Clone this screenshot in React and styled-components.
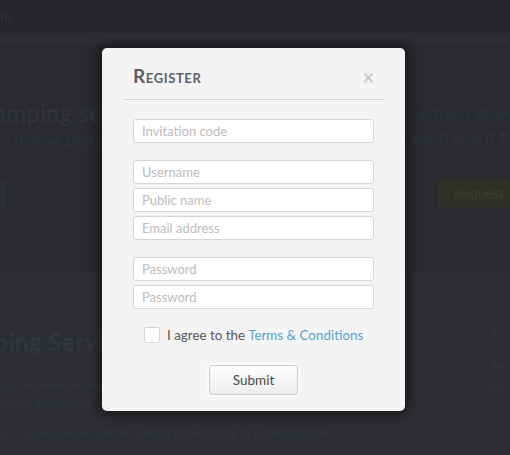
import React from "react";
import styled, { createGlobalStyle } from "styled-components";

const Global = createGlobalStyle`
  html, body { margin: 0; padding: 0; }
  body { background: #2c2e33; font-family: Lato, "Open Sans", sans-serif; overflow: hidden; }
`;

const Page = styled.div`
  position: relative;
  width: 510px;
  height: 455px;
  overflow: hidden;
  display: flex;
  flex-direction: column;
`;

const TopBar = styled.div`
  height: 33px;
  background: #25272c;
  display: flex;
  align-items: center;
  color: #2f3237;
  font-size: 13px;
  flex-shrink: 0;
`;

const Band = styled.div`
  height: 11px;
  background: #2b2d32;
  flex-shrink: 0;
`;

const Hero = styled.div`
  height: 228px;
  background: #282a30;
  flex-shrink: 0;
  display: grid;
  grid-template-columns: 405px 1fr;
  padding-top: 55px;
  box-sizing: border-box;
  overflow: hidden;
`;

const Col = styled.div`
  display: flex;
  flex-direction: column;
  white-space: nowrap;
  overflow: hidden;
`;

const HeroTitle = styled.div`
  font-size: 24px;
  font-weight: 700;
  color: #2f3238;
  line-height: 28px;
  margin-left: ${(p) => p.$shift || 0}px;
`;

const HeroLine = styled.div`
  font-size: 16px;
  color: #2f3238;
  line-height: 24px;
  margin-left: ${(p) => p.$shift || 0}px;
  margin-top: ${(p) => p.$top || 0}px;
`;

const GhostButton = styled.div`
  margin-top: 30px;
  margin-left: ${(p) => p.$shift || 0}px;
  width: ${(p) => p.$w}px;
  height: 28px;
  background: ${(p) => p.$bg};
  color: #383d32;
  font-size: 14px;
  line-height: 28px;
  padding-left: ${(p) => p.$pad || 0}px;
  box-sizing: border-box;
  border-radius: 2px;
`;

const Lower = styled.div`
  flex: 1;
  background: #2c2e33;
  display: grid;
  grid-template-columns: 405px 1fr;
  padding-top: 54px;
  box-sizing: border-box;
  overflow: hidden;
`;

const LowerTitle = styled.div`
  font-size: 25px;
  font-weight: 700;
  color: #33363c;
  line-height: 30px;
  margin-left: -6px;
`;

const LowerText = styled.div`
  font-size: 12px;
  color: #33363c;
  line-height: 18px;
  margin-top: ${(p) => p.$top || 0}px;
  margin-left: ${(p) => p.$shift || 0}px;
`;

const Modal = styled.div`
  position: absolute;
  left: 102px;
  top: 48px;
  width: 303px;
  height: 363px;
  background: #f4f4f4;
  border-radius: 5px;
  box-shadow: 0 0 12px 4px rgba(0, 0, 0, 0.45);
  padding: 0 21px 0 22px;
  box-sizing: border-box;
  display: flex;
  flex-direction: column;
`;

const Header = styled.div`
  height: 52px;
  border-bottom: 1px solid #d2d2d2;
  display: flex;
  align-items: center;
  justify-content: space-between;
  padding: 4px 10px 0 9px;
  box-sizing: border-box;
`;

const Title = styled.h2`
  margin: 0;
  font-size: 19px;
  font-weight: 700;
  font-variant: small-caps;
  letter-spacing: 0.6px;
  color: #5c626a;
`;

const Close = styled.span`
  font-size: 20px;
  font-weight: 700;
  color: #c9c9c9;
  line-height: 1;
  margin-top: 2px;
`;

const Body = styled.div`
  padding: 19px 10px 0 9px;
  display: flex;
  flex-direction: column;
  gap: 17px;
`;

const Group = styled.div`
  display: flex;
  flex-direction: column;
  gap: 4px;
`;

const Input = styled.input`
  width: 241px;
  height: 24px;
  box-sizing: border-box;
  border: 1px solid #d6d6d6;
  border-radius: 3px;
  background: #fff;
  padding: 0 8px;
  font-family: Lato, sans-serif;
  font-size: 13px;
  color: #555;
  outline: none;
  &::placeholder { color: #bcbcbc; }
`;

const AgreeRow = styled.label`
  display: flex;
  align-items: center;
  gap: 7px;
  margin-top: 1px;
  padding-left: 11px;
  font-size: 13.4px;
  color: #575757;
`;

const Box = styled.span`
  width: 14px;
  height: 14px;
  border: 1px solid #d4d4d4;
  border-radius: 3px;
  background: #fff;
`;

const Link = styled.a`
  color: #5d9fcf;
  text-decoration: none;
`;

const SubmitWrap = styled.div`
  display: flex;
  justify-content: center;
  margin-top: 5px;
`;

const Submit = styled.button`
  width: 89px;
  height: 30px;
  border: 1px solid #cdcdcd;
  border-radius: 3px;
  background: linear-gradient(#ffffff, #ececec);
  box-shadow: 0 0 0 2px #fafafa;
  font-family: Lato, sans-serif;
  font-size: 13.5px;
  color: #4a4a4a;
`;

export default function App() {
  return (
    <>
      <Global />
      <Page>
        <TopBar>ny</TopBar>
        <Band />
        <Hero>
          <Col>
            <HeroTitle $shift={-6}>amping service</HeroTitle>
            <HeroLine $shift={-3}>r creative professionals</HeroLine>
            <GhostButton $w={5} $bg="#2c2f34" />
          </Col>
          <Col>
            <HeroLine $top={2}>e actively growing</HeroLine>
            <HeroLine>would love it for</HeroLine>
            <GhostButton $w={80} $shift={33} $pad={16} $bg="#2d3128">Request</GhostButton>
          </Col>
        </Hero>
        <Lower>
          <Col>
            <LowerTitle>ping Service</LowerTitle>
            <LowerText $top={20}>e is an online service</LowerText>
            <LowerText>tronic documents</LowerText>
            <LowerText $top={12}>p, it is commonly used as a proof of existence in a specific time</LowerText>
          </Col>
          <Col>
            <LowerText $shift={87}>F</LowerText>
            <LowerText $top={14} $shift={86}>Te</LowerText>
            <LowerText $shift={86}>Co</LowerText>
          </Col>
        </Lower>
        <Modal>
          <Header>
            <Title>Register</Title>
            <Close>×</Close>
          </Header>
          <Body>
            <Input placeholder="Invitation code" />
            <Group>
              <Input placeholder="Username" />
              <Input placeholder="Public name" />
              <Input placeholder="Email address" />
            </Group>
            <Group>
              <Input type="password" placeholder="Password" />
              <Input type="password" placeholder="Password" />
            </Group>
            <AgreeRow>
              <Box />
              <span>
                I agree to the <Link>Terms &amp; Conditions</Link>
              </span>
            </AgreeRow>
            <SubmitWrap>
              <Submit>Submit</Submit>
            </SubmitWrap>
          </Body>
        </Modal>
      </Page>
    </>
  );
}
